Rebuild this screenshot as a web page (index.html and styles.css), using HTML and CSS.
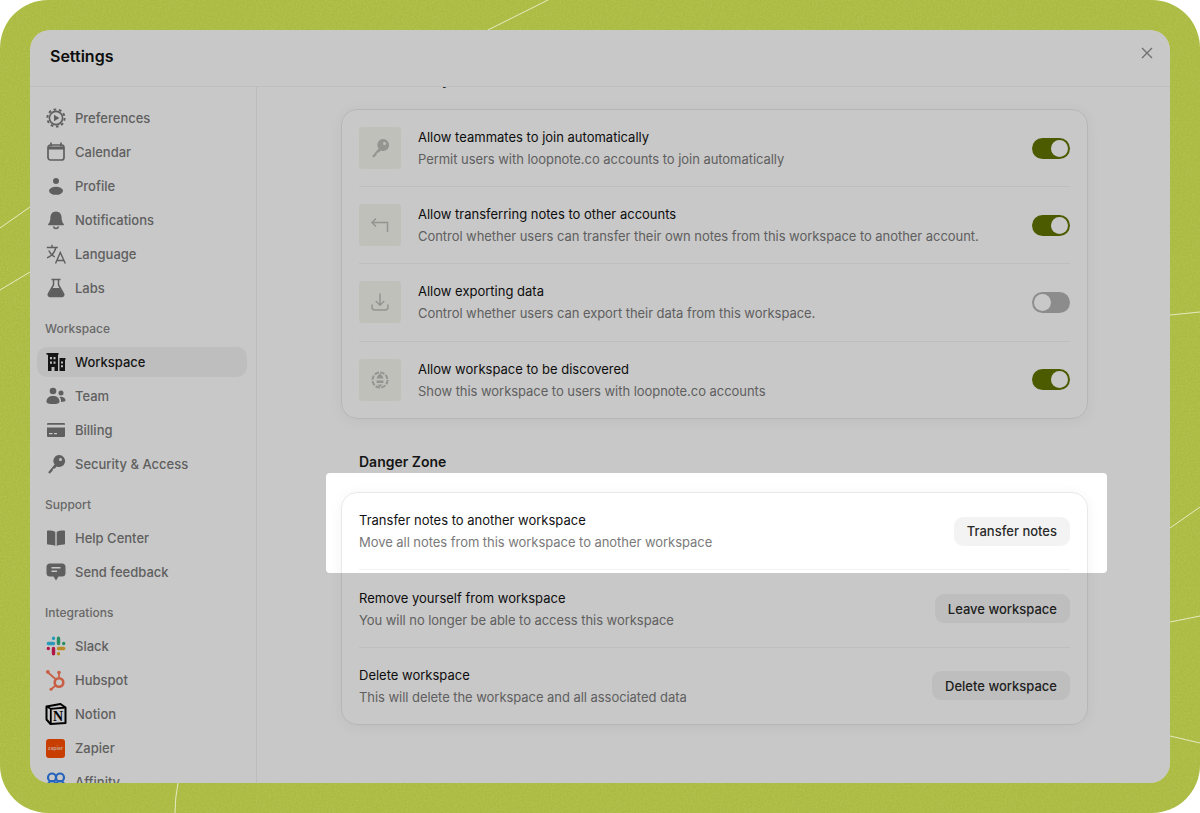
FILE: index.html
```html
<!DOCTYPE html>
<html lang="en">

<head>
    <meta charset="UTF-8">
    <meta name="viewport" content="width=device-width, initial-scale=1.0">
    <title>Settings</title>
    <link rel="stylesheet" href="styles.css">
</head>

<body>
    <div class="frame">
        <!-- grain and thin lines of the backdrop -->
        <svg class="backdrop" viewBox="0 0 1200 813" preserveAspectRatio="none">
            <filter id="grain">
                <feTurbulence type="fractalNoise" baseFrequency="0.55" numOctaves="2" seed="4" />
                <feColorMatrix values="0 0 0 0 1  0 0 0 0 1  0 0 0 0 .6  0 0 0 .9 -.3" />
            </filter>
            <rect width="1200" height="813" filter="url(#grain)" opacity=".22" />
            <g class="backdrop-lines">
                <path d="M488 30 548 0" />
                <path d="M0 228 30 207" />
                <path d="M0 290 30 272" />
                <path d="M178 783Q175 798 175 813" />
                <path d="M1170 315 1200 312" />
                <path d="M1170 528 1200 507" />
                <path d="M1170 622 1200 616" />
                <path d="M1170 736 1200 743" />
            </g>
        </svg>

        <div class="window">
            <header class="window-head">
                <h1>Settings</h1>
                <button class="close" aria-label="Close">
                    <svg viewBox="0 0 12 12"><path d="M1 1 11 11M11 1 1 11" /></svg>
                </button>
            </header>

            <div class="window-body">
                <nav class="sidebar">
                    <a class="nav-item">
                        <svg viewBox="0 0 20 20" class="icon">
                            <circle cx="10" cy="10" r="8.6" fill="none" stroke="currentColor" stroke-width="2" stroke-dasharray="2.7 2.7" />
                            <circle cx="10" cy="10" r="6.6" fill="none" stroke="currentColor" stroke-width="1.6" />
                            <path d="M8 6.8 13.4 10 8 13.2Z" fill="currentColor" />
                        </svg>
                        Preferences
                    </a>
                    <a class="nav-item">
                        <svg viewBox="0 0 20 20" class="icon">
                            <path d="M5 1v3M15 1v3" stroke="currentColor" stroke-width="1.6" stroke-linecap="round" />
                            <rect x="2" y="3" width="16" height="15" rx="2.5" fill="none" stroke="currentColor" stroke-width="1.7" />
                            <path d="M2 4.5h16v3H2z" fill="currentColor" />
                        </svg>
                        Calendar
                    </a>
                    <a class="nav-item">
                        <svg viewBox="0 0 20 20" class="icon">
                            <circle cx="10" cy="5" r="3" fill="currentColor" />
                            <ellipse cx="10" cy="14.8" rx="7" ry="4" fill="currentColor" />
                        </svg>
                        Profile
                    </a>
                    <a class="nav-item">
                        <svg viewBox="0 0 20 20" class="icon">
                            <path d="M10 1.5c3.6 0 5.6 2.8 5.6 6.200 0 3.200.8 4.800 2.200 6.300.4.500.1 1.200-.6 1.200H2.800c-.7 0-1-.7-.6-1.200C3.600 12.500 4.400 10.900 4.400 7.700 4.400 4.300 6.400 1.500 10 1.500Z" fill="currentColor" />
                            <path d="M7.500 16.500c.3 1.300 1.300 2 2.500 2s2.200-.7 2.500-2" fill="none" stroke="currentColor" stroke-width="1.500" />
                        </svg>
                        Notifications
                    </a>
                    <a class="nav-item">
                        <svg viewBox="0 0 20 20" class="icon">
                            <path d="M.8 3.500h11M6 .8v2.700M9.800 3.500C8.800 8.500 5.500 12 1 13.800M2.800 6.500c1.200 2.800 3.300 5 6 6.300M9.500 19.500 14.300 8.500l5 11M11 16.500h7" fill="none" stroke="currentColor" stroke-width="1.400" />
                        </svg>
                        Language
                    </a>
                    <a class="nav-item">
                        <svg viewBox="0 0 20 20" class="icon">
                            <path d="M5.500 1.500h9M7.500 1.500V7L2.500 15.500c-.8 1.500.2 3 1.800 3h11.400c1.600 0 2.600-1.500 1.800-3L12.500 7V1.500" fill="none" stroke="currentColor" stroke-width="1.500" />
                            <path d="M6 10h8l3.500 6.500c.3.800-.2 1.500-1 1.500h-13c-.8 0-1.300-.7-1-1.500Z" fill="currentColor" />
                        </svg>
                        Labs
                    </a>

                    <div class="nav-label">Workspace</div>
                    <a class="nav-item active">
                        <svg viewBox="0 0 20 20" class="icon">
                            <path fill-rule="evenodd" d="M.5 1h12v1.800H12V19H8.500v-4h-3v4H2V2.800H.5ZM4 5v2.200h2V5Zm3.500 0v2.200h2V5ZM4 9.500v2.200h2V9.500Zm3.500 0v2.200h2V9.500Z" fill="currentColor" />
                            <path fill-rule="evenodd" d="M13.500 6h6v1.800H19V19h-5.500Zm1.500 3.500v2h2v-2Zm0 3.800v2h2v-2Z" fill="currentColor" />
                        </svg>
                        Workspace
                    </a>
                    <a class="nav-item">
                        <svg viewBox="0 0 20 20" class="icon">
                            <circle cx="7" cy="5" r="3.300" fill="currentColor" />
                            <circle cx="15" cy="7" r="2.500" fill="currentColor" />
                            <path d="M.500 15.500C.500 12 3.200 10 7 10s6.500 2 6.500 5.500c0 2-2.500 2.500-6.500 2.500S.500 17.500.500 15.500Z" fill="currentColor" />
                            <path d="M14.500 10.800c2.800 0 5 1.200 5 3.500 0 1.300-1.500 1.700-4.500 1.700.2-2-.2-3.800-1.500-5.100Z" fill="currentColor" />
                        </svg>
                        Team
                    </a>
                    <a class="nav-item">
                        <svg viewBox="0 0 20 20" class="icon">
                            <path fill-rule="evenodd" d="M2 3h16a1 1 0 0 1 1 1v.800H1V4a1 1 0 0 1 1-1ZM1 7.500h18V16a1 1 0 0 1-1 1H2a1 1 0 0 1-1-1ZM3 13v1.300h3.500V13Zm5 0v1.300h3V13Z" fill="currentColor" />
                        </svg>
                        Billing
                    </a>
                    <a class="nav-item">
                        <svg viewBox="0 0 20 20" class="icon">
                            <path fill-rule="evenodd" d="M13 1a6 6 0 1 1-2.300 11.500L8.500 14.700H6.800v1.800l-2.700 2.700c-.8.700-2.200-.5-1.500-1.400l6-7.200A6 6 0 0 1 13 1Zm1.500 3a1.500 1.500 0 1 0 0 3 1.500 1.500 0 0 0 0-3Z" fill="currentColor" />
                        </svg>
                        Security &amp; Access
                    </a>

                    <div class="nav-label">Support</div>
                    <a class="nav-item">
                        <svg viewBox="0 0 20 20" class="icon">
                            <path d="M1 3.500C1 2.900 1.400 2.500 2 2.500c3.300 0 6 .3 7.300 1.500V18c-1.500-1-4-1.400-7.300-1.500-.6 0-1-.4-1-1ZM19 3.500c0-.6-.4-1-1-1-3.300 0-6 .3-7.300 1.500V18c1.500-1 4-1.400 7.300-1.500.6 0 1-.4 1-1Z" fill="currentColor" />
                        </svg>
                        Help Center
                    </a>
                    <a class="nav-item">
                        <svg viewBox="0 0 20 20" class="icon">
                            <path fill-rule="evenodd" d="M4 1.500h12a3.500 3.500 0 0 1 3.500 3.500v6a3.500 3.500 0 0 1-3.500 3.500h-3.500L10 18.500l-2.500-4H4A3.500 3.500 0 0 1 .500 11V5A3.500 3.500 0 0 1 4 1.500ZM5.500 5v1.500h9V5Zm0 3.500V10h5.500V8.500Z" fill="currentColor" />
                        </svg>
                        Send feedback
                    </a>

                    <div class="nav-label">Integrations</div>
                    <a class="nav-item">
                        <svg viewBox="0 0 20 20" class="icon">
                            <g fill="none" stroke-width="3.400" stroke-linecap="round">
                                <path d="M2.300 7.500H7.500M7.500 2.300v.1" stroke="#36c5f0" />
                                <path d="M12.500 2.300v5.200M17.700 7.500v.1" stroke="#2eb67d" />
                                <path d="M12.500 12.500h5.200M12.500 17.700v.1" stroke="#ecb22e" />
                                <path d="M7.500 12.500v5.200M2.300 12.500v.1" stroke="#e01e5a" />
                            </g>
                        </svg>
                        Slack
                    </a>
                    <a class="nav-item">
                        <svg viewBox="0 0 22 22" class="icon logo-wide">
                            <g fill="none" stroke="#ff7a59">
                                <circle cx="14" cy="13.500" r="4.300" stroke-width="2.600" />
                                <path d="M14 8.500V4.500M11 10.500 3 3.500M10.500 16.500 6.500 20" stroke-width="1.700" />
                            </g>
                            <g fill="#ff7a59">
                                <circle cx="14" cy="3.500" r="1.800" />
                                <circle cx="2.800" cy="2.800" r="1.900" />
                                <circle cx="6" cy="20.300" r="1.500" />
                            </g>
                        </svg>
                        Hubspot
                    </a>
                    <a class="nav-item">
                        <svg viewBox="0 0 22 22" class="icon logo-wide">
                            <path d="M1.500 3.500 15.500 1 20.500 4.500V20L5.500 21 1.500 16.500Z" fill="#fff" stroke="#000" stroke-width="2" stroke-linejoin="round" />
                            <path d="M5.800 5.800 20.500 4.500M1.500 3.500 5.800 5.800V21" fill="none" stroke="#000" stroke-width="1.800" />
                            <text x="13" y="17.800" text-anchor="middle" class="notion-n">N</text>
                        </svg>
                        Notion
                    </a>
                    <a class="nav-item">
                        <span class="zapier-logo">zapier</span>
                        Zapier
                    </a>
                    <a class="nav-item">
                        <svg viewBox="0 0 20 20" class="icon">
                            <g fill="none" stroke="#2f7ff0" stroke-width="2.200">
                                <circle cx="6" cy="5.500" r="4" />
                                <circle cx="14" cy="5.500" r="4" />
                                <circle cx="6" cy="13" r="4" />
                                <circle cx="14" cy="13" r="4" />
                            </g>
                        </svg>
                        Affinity
                    </a>
                </nav>

                <main class="content">
                    <h2 class="section-title">Data visibility</h2>
                    <section class="card">
                        <div class="row">
                            <span class="row-icon">
                                <svg viewBox="0 0 20 20">
                                    <path fill-rule="evenodd" d="M13 1a6 6 0 1 1-2.300 11.500L8.500 14.700H6.800v1.800l-2.700 2.700c-.8.700-2.200-.5-1.500-1.400l6-7.200A6 6 0 0 1 13 1Zm1.500 3a1.500 1.500 0 1 0 0 3 1.500 1.500 0 0 0 0-3Z" fill="currentColor" />
                                </svg>
                            </span>
                            <div class="row-text">
                                <div class="row-title">Allow teammates to join automatically</div>
                                <div class="row-desc">Permit users with loopnote.co accounts to join automatically</div>
                            </div>
                            <span class="toggle on"></span>
                        </div>
                        <div class="row">
                            <span class="row-icon">
                                <svg viewBox="0 0 20 20">
                                    <path d="M6 3.500 2 7.500l4 4M2 7.500h15.500V17" fill="none" stroke="currentColor" stroke-width="1.500" />
                                </svg>
                            </span>
                            <div class="row-text">
                                <div class="row-title">Allow transferring notes to other accounts</div>
                                <div class="row-desc">Control whether users can transfer their own notes from this workspace to another account.</div>
                            </div>
                            <span class="toggle on"></span>
                        </div>
                        <div class="row">
                            <span class="row-icon">
                                <svg viewBox="0 0 20 20">
                                    <path d="M10 1.500v11.500M5.800 9 10 13.200 14.200 9M2 12.500v2.500a3 3 0 0 0 3 3h10a3 3 0 0 0 3-3v-2.500" fill="none" stroke="currentColor" stroke-width="1.500" />
                                </svg>
                            </span>
                            <div class="row-text">
                                <div class="row-title">Allow exporting data</div>
                                <div class="row-desc">Control whether users can export their data from this workspace.</div>
                            </div>
                            <span class="toggle"></span>
                        </div>
                        <div class="row">
                            <span class="row-icon">
                                <svg viewBox="0 0 20 20">
                                    <circle cx="10" cy="10" r="7.500" fill="none" stroke="currentColor" stroke-width="2" stroke-dasharray="4.500 1.400" />
                                    <path d="M10 3.500c2 1.500 3.200 3.300 3.400 5H6.600C6.800 6.800 8 5 10 3.500ZM6.600 10.500h6.800V13H6.600ZM7.500 14.500h5L10 17Z" fill="currentColor" />
                                </svg>
                            </span>
                            <div class="row-text">
                                <div class="row-title">Allow workspace to be discovered</div>
                                <div class="row-desc">Show this workspace to users with loopnote.co accounts</div>
                            </div>
                            <span class="toggle on"></span>
                        </div>
                    </section>

                    <h2 class="section-title danger">Danger Zone</h2>
                    <section class="card">
                        <div class="row">
                            <div class="row-text">
                                <div class="row-title">Transfer notes to another workspace</div>
                                <div class="row-desc">Move all notes from this workspace to another workspace</div>
                            </div>
                            <button class="btn">Transfer notes</button>
                        </div>
                        <div class="row">
                            <div class="row-text">
                                <div class="row-title">Remove yourself from workspace</div>
                                <div class="row-desc">You will no longer be able to access this workspace</div>
                            </div>
                            <button class="btn">Leave workspace</button>
                        </div>
                        <div class="row">
                            <div class="row-text">
                                <div class="row-title">Delete workspace</div>
                                <div class="row-desc">This will delete the workspace and all associated data</div>
                            </div>
                            <button class="btn">Delete workspace</button>
                        </div>
                    </section>
                </main>
            </div>

            <!-- product tour spotlight: its shadow dims everything else in the window -->
            <div class="spotlight"></div>
        </div>
    </div>
</body>

</html>
```

FILE: styles.css
```css
* {
    box-sizing: border-box;
}

html,
body {
    height: 100%;
}

body {
    margin: 0;
    background: #fff;
    font-family: Inter, "Liberation Sans", sans-serif;
    color: #1c1c1c;
}

.frame {
    position: relative;
    height: 813px;
    padding: 30px;
    border-radius: 48px;
    background: #abbb42;
    overflow: hidden;
}

.backdrop {
    position: absolute;
    inset: 0;
    width: 100%;
    height: 100%;
}

.backdrop-lines path {
    fill: none;
    stroke: #e4ebc0;
    stroke-width: 1;
}

.window {
    position: relative;
    display: flex;
    flex-direction: column;
    height: 100%;
    border-radius: 20px;
    background: #fff;
    overflow: hidden;
}

.window-head {
    display: flex;
    flex: none;
    align-items: center;
    justify-content: space-between;
    height: 57px;
    padding: 0 17px 4px 20px;
    border-bottom: 1px solid #f2f2f2;
}

.window-head h1 {
    margin: 0;
    font-size: 16px;
    font-weight: 600;
    color: #111;
}

.close {
    display: flex;
    margin: -7px 0 0;
    padding: 0;
    border: 0;
    background: none;
}

.close svg {
    width: 12px;
    height: 12px;
    fill: none;
    stroke: #8f8f8f;
    stroke-width: 1.4;
}

.window-body {
    display: flex;
    flex: 1;
    min-height: 0;
}

.sidebar {
    flex: none;
    width: 227px;
    padding: 16px 9px 0 7px;
    border-right: 1px solid #f0f0f0;
    overflow: hidden;
}

.nav-item {
    display: flex;
    align-items: center;
    gap: 9px;
    height: 30px;
    margin-bottom: 4px;
    padding-left: 9px;
    border-radius: 10px;
    font-size: 13px;
    font-weight: 500;
    color: #7a7a7a;
}

.nav-item.active {
    background: #f3f3f3;
    color: #1c1c1c;
}

.nav-label {
    height: 20px;
    margin: 16px 0 8px 8px;
    font-size: 12px;
    line-height: 20px;
    font-weight: 500;
    color: #858585;
}

.icon {
    flex: none;
    width: 20px;
    height: 20px;
}

.icon.logo-wide {
    width: 22px;
    height: 22px;
    margin: 0 -1px;
}

.notion-n {
    font-family: "Liberation Serif", serif;
    font-size: 14px;
    font-weight: 700;
    fill: #000;
}

.zapier-logo {
    flex: none;
    width: 19px;
    height: 19px;
    margin: 0 1px 0 0;
    border-radius: 3px;
    background: #ff4f00;
    font-size: 5px;
    line-height: 19px;
    font-weight: 700;
    text-align: center;
    color: #ffc9b0;
    overflow: hidden;
}

.content {
    flex: 1;
    min-width: 0;
    padding: 0 82px 0 84px;
    overflow: hidden;
}

.section-title {
    height: 24px;
    margin: -19px 0 17px 18px;
    font-size: 14px;
    line-height: 24px;
    font-weight: 600;
}

.section-title.danger {
    margin: 31.5px 0 18px 18px;
}

.card {
    border: 1px solid #e9e9e9;
    border-radius: 16px;
    box-shadow: 0 2px 14px rgba(0, 0, 0, .05);
}

.row {
    display: flex;
    align-items: center;
    gap: 17px;
    height: 77.2px;
    margin: 0 17px;
    border-bottom: 1px solid #f2f2f2;
}

.row:last-child {
    height: 76.2px;
    border-bottom: 0;
}

.row-icon {
    display: flex;
    flex: none;
    align-items: center;
    justify-content: center;
    width: 42px;
    height: 42px;
    border-radius: 4px;
    background: #f4f5ee;
    color: #bdbdb8;
}

.row-icon svg {
    width: 20px;
    height: 20px;
}

.row-text {
    flex: 1;
    min-width: 0;
}

.row-title {
    margin-bottom: 2px;
    font-size: 13px;
    line-height: 20px;
    font-weight: 400;
    color: #111;
}

.row-desc {
    font-size: 13px;
    line-height: 20px;
    letter-spacing: -.05px;
    color: #7a7a7a;
}

.toggle {
    position: relative;
    flex: none;
    width: 38px;
    height: 21px;
    border-radius: 11px;
    background: #b3b3b3;
}

.toggle::after {
    content: "";
    position: absolute;
    top: 2px;
    left: 2px;
    width: 17px;
    height: 17px;
    border-radius: 50%;
    background: #fff;
}

.toggle.on {
    background: #627500;
}

.toggle.on::after {
    left: 19px;
}

.btn {
    flex: none;
    height: 29px;
    padding: 0 13px;
    border: 0;
    border-radius: 9px;
    background: #f3f3f3;
    font: 500 13px Inter, "Liberation Sans", sans-serif;
    color: #2a2a2a;
}

.spotlight {
    position: absolute;
    top: 443px;
    left: 296px;
    width: 781px;
    height: 100px;
    border-radius: 4px;
    box-shadow: 0 0 0 1400px rgba(0, 0, 0, .216);
    pointer-events: none;
}
```
